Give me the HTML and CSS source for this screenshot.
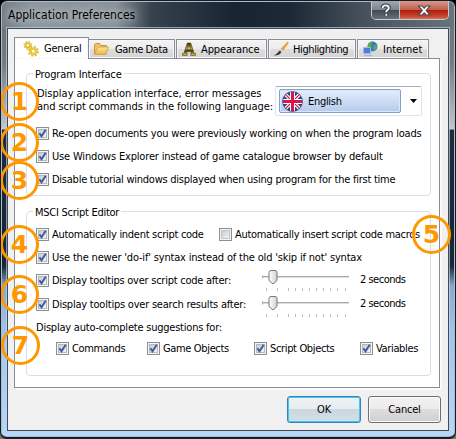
FILE: index.html
```
<!DOCTYPE html>
<html lang="en">
<head>
<meta charset="utf-8">
<title>Application Preferences</title>
<link rel="stylesheet" href="styles.css">
</head>
<body>
<svg width="0" height="0" class="defs">
  <defs>
    <linearGradient id="box" x1="0" y1="0" x2="1" y2="1"><stop offset="0" stop-color="#c4c9d0"/><stop offset="1" stop-color="#f6f6f6"/></linearGradient>
    <linearGradient id="thumb" x1="0" y1="0" x2="1" y2="0"><stop offset="0" stop-color="#fff"/><stop offset="1" stop-color="#d0d0d0"/></linearGradient>
    <linearGradient id="folder" x1="0" y1="0" x2="0" y2="1"><stop offset="0" stop-color="#fbe79b"/><stop offset="1" stop-color="#e9b548"/></linearGradient>
    <linearGradient id="metal" x1="0" y1="0" x2="0" y2="1"><stop offset="0" stop-color="#2f2b12"/><stop offset=".45" stop-color="#c3a52c"/><stop offset=".62" stop-color="#3b3415"/><stop offset="1" stop-color="#f0cf35"/></linearGradient>
    <clipPath id="disc"><circle cx="10.5" cy="10.5" r="10"/></clipPath>
    <symbol id="on" viewBox="0 0 13 13"><rect x=".5" y=".5" width="12" height="12" fill="#f4f4f4" stroke="#8e8f8f"/><rect x="2.5" y="2.5" width="8" height="8" fill="url(#box)" stroke="#b4bac2"/><path d="M3.4 6.2 5.5 9.3 9.7 2.7" fill="none" stroke="#42599b" stroke-width="2"/></symbol>
    <symbol id="off" viewBox="0 0 13 13"><rect x=".5" y=".5" width="12" height="12" fill="#f4f4f4" stroke="#8e8f8f"/><rect x="2.5" y="2.5" width="8" height="8" fill="url(#box)" stroke="#c0c5cb"/></symbol>
    <symbol id="slider" viewBox="0 0 90 24"><path d="M1 6.500H87" stroke="#a9a9a9" stroke-width="1"/><path d="M1 7.500H87" stroke="#dedede"/><path d="M.500 5.500v3" stroke="#a9a9a9"/><path d="M9 .500h4q2 0 2 2v8l-4 3.500-4-3.500v-8q0-2 2-2z" fill="url(#thumb)" stroke="#777"/><path d="M4.500 18v3M15.500 18v3M26.500 18v3M33.500 18v3M40.500 18v3M47.500 18v3M54.500 18v3M61.500 18v3M68.500 18v3M75.500 18v3M83.500 18v3" stroke="#bcbcbc"/></symbol>
  </defs>
</svg>
<div class="window">
  <header class="titlebar">
    <h1>Application Preferences</h1>
    <div class="controls">
      <svg class="help" width="28" height="19" viewBox="0 0 28 19"><path d="M11 7q0-2.800 3.200-2.800T17.400 6.800Q17.400 8.300 15.800 9.200 14.800 9.800 14.800 11.200M14.800 13v2" fill="none" stroke="#333b44" stroke-width="4"/><path d="M11 7q0-2.800 3.200-2.800T17.400 6.800Q17.400 8.300 15.800 9.200 14.800 9.800 14.800 11.200M14.800 13v2" fill="none" stroke="#f5f5f5" stroke-width="2"/></svg>
      <svg class="close" width="48" height="19" viewBox="0 0 48 19"><path d="M18.500 5h3.700l2 2.200 2-2.200h3.700l-3.700 4.500 3.700 4.500h-3.700l-2-2.200-2 2.200h-3.700l3.700-4.500z" fill="#fff" stroke="#5d4b4e" stroke-width="1.200"/></svg>
    </div>
  </header>
  <main class="client">
    <nav class="tabs">
      <div class="tab active"><svg width="16" height="16" viewBox="0 0 16 16"><g fill="none" stroke="#dfbd32"><circle cx="4.800" cy="4.300" r="2.200" stroke-width="1.800"/><circle cx="4.800" cy="4.300" r="3.700" stroke-width="1.400" stroke-dasharray="1.500 1.400"/><circle cx="10.300" cy="10.300" r="2.800" stroke-width="2.600" stroke="#e9c93f"/><circle cx="10.300" cy="10.300" r="4.700" stroke-width="1.700" stroke-dasharray="1.900 1.790"/></g></svg><span>General</span></div>
      <div class="tab data"><svg width="16" height="16" viewBox="0 0 16 16"><path d="M1.500 13.500v-10l1-1h4l1.500 2h5.500v3" fill="#eec566" stroke="#c99436"/><path d="M1.500 13.500 4 7.500l2-1.500h9.500l-2.500 7.500z" fill="url(#folder)" stroke="#d7a648"/></svg><span>Game Data</span></div>
      <div class="tab look"><svg width="16" height="16" viewBox="0 0 16 16"><path fill-rule="evenodd" d="M1.500 14.500v-2h1.300L6.300 2h3.400l3.500 10.500h1.300v2H9.800v-2h.8l-.6-1.700H6l-.6 1.700h.8v2zM6.600 8.500h2.800L8 4.200z" fill="url(#metal)" stroke="#4b431b" stroke-width=".6"/></svg><span>Appearance</span></div>
      <div class="tab high"><svg width="16" height="16" viewBox="0 0 16 16"><path d="M14.800.8 15 2.500 10 9.500 8 8z" fill="#f3a62f" stroke="#dc861d" stroke-width=".5"/><path d="M8 8l2 1.500-1.600 1.600L6.500 9.600z" fill="#c9cfda"/><path d="M6.500 9.600l1.900 1.500Q7 14.500 1 14.800 4.700 12.600 6.500 9.600z" fill="#3d3936"/></svg><span>Highlighting</span></div>
      <div class="tab net"><svg width="16" height="16" viewBox="0 0 16 16"><circle cx="10.500" cy="5.500" r="5" fill="#3f78c8"/><path d="M6 3q2-3 4.500-2.200L9 3l1 2-2 2-2-1zM12 4l3 .5q.5 3-2 5L11 8z" fill="#54b04c"/><path d="M1.500 6.500h7v6h-7z" fill="#4c7ddb" stroke="#a9b9dc"/><path d="M2 14.500h8" stroke="#aeb6c4" stroke-width="1.500"/></svg><span>Internet</span></div>
    </nav>
    <section class="pane">
      <fieldset class="group program">
        <legend>Program Interface</legend>
        <div class="language">
          <p><span class="line1">Display application interface, error messages</span><br><span class="line2">and script commands in the following language:</span></p>
          <div class="combo">
            <div class="choice">
              <svg width="21" height="21" viewBox="0 0 21 21"><g clip-path="url(#disc)"><path fill="#29438c" d="M0 0h21v21H0z"/><path d="M0 0l21 21M21 0 0 21" stroke="#f5f3f8" stroke-width="3.600"/><path d="M0 0l21 21M21 0 0 21" stroke="#cf1747" stroke-width="1.200"/><path d="M10.500 0v21M0 10.500h21" stroke="#fff" stroke-width="5"/><path d="M10.500 0v21M0 10.500h21" stroke="#d7174b" stroke-width="3"/></g><circle cx="10.500" cy="10.500" r="10" fill="none" stroke="#27345f" stroke-opacity=".5"/></svg>
              <span>English</span>
            </div>
            <svg class="arrow" width="7" height="4" viewBox="0 0 7 4"><path d="M0 0h7L3.500 4z"/></svg>
          </div>
        </div>
        <label class="check"><svg width="13" height="13"><use href="#on"/></svg><span class="s1">Re-open documents you were previously working on when the program loads</span></label>
        <label class="check"><svg width="13" height="13"><use href="#on"/></svg><span class="s2">Use Windows Explorer instead of game catalogue browser by default</span></label>
        <label class="check"><svg width="13" height="13"><use href="#on"/></svg><span class="s3">Disable tutorial windows displayed when using program for the first time</span></label>
      </fieldset>
      <fieldset class="group editor">
        <legend>MSCI Script Editor</legend>
        <div class="pair">
          <label class="check"><svg width="13" height="13"><use href="#on"/></svg><span class="s4">Automatically indent script code</span></label>
          <label class="check"><svg width="13" height="13"><use href="#off"/></svg><span class="s5">Automatically insert script code macros</span></label>
        </div>
        <label class="check syntax"><svg width="13" height="13"><use href="#on"/></svg><span class="s6">Use the newer 'do-if' syntax instead of the old 'skip if not' syntax</span></label>
        <div class="delay">
          <label class="check"><svg width="13" height="13"><use href="#on"/></svg><span class="s7">Display tooltips over script code after:</span></label>
          <svg class="slider" width="90" height="24"><use href="#slider"/></svg><span class="value">2 seconds</span>
        </div>
        <div class="delay second">
          <label class="check"><svg width="13" height="13"><use href="#on"/></svg><span class="s8">Display tooltips over search results after:</span></label>
          <svg class="slider" width="90" height="24"><use href="#slider"/></svg><span class="value">2 seconds</span>
        </div>
        <p class="suggest">Display auto-complete suggestions for:</p>
        <div class="kinds">
          <label class="check"><svg width="13" height="13"><use href="#on"/></svg><span>Commands</span></label>
          <label class="check"><svg width="13" height="13"><use href="#on"/></svg><span>Game Objects</span></label>
          <label class="check"><svg width="13" height="13"><use href="#on"/></svg><span>Script Objects</span></label>
          <label class="check"><svg width="13" height="13"><use href="#on"/></svg><span>Variables</span></label>
        </div>
      </fieldset>
    </section>
    <footer class="actions"><button class="ok">OK</button><button>Cancel</button></footer>
  </main>
  <span class="badge b1">1</span><span class="badge b2">2</span><span class="badge b3">3</span><span class="badge b4">4</span><span class="badge b5">5</span><span class="badge b6">6</span><span class="badge b7">7</span>
</div>
</body>
</html>
```
FILE: styles.css
```
* { box-sizing: border-box; }
body { margin: 0; background: linear-gradient(#000 0 88%, #777); overflow: hidden; font: 11px/13px "DejaVu Sans Condensed", "DejaVu Sans", sans-serif; font-stretch: condensed; color: #000; }
svg { display: block; flex: none; }
.defs { position: absolute; }
p, h1 { margin: 0; font-size: inherit; font-weight: inherit; }
.window { position: relative; width: 456px; height: 439px; padding: 0 7px 7px; border: 1px solid #151b22; border-width: 1px 1px 2px; border-radius: 7px; overflow: hidden; box-shadow: inset 0 0 0 1px #aebac4;
  background: linear-gradient(90deg, #757d84 0, #8f979e 30px, #8b939a 115px, #36424e 150px, #182431 235px, #1c2936 290px, #45505b 360px, #6a747d 456px) 0 0/100% 28px no-repeat, linear-gradient(#6a7178 0, #737a81 60px, #bfc3c7 125px, #c8cbce 128px, #1c2d3e 129px, #172636 265px, #86a9ce 285px, #9fc4ec 330px, #b5d8fc 439px); }
.titlebar { height: 27px; display: flex; justify-content: space-between; }
h1 { margin: 6px 0 0; height: 16px; font-size: 12px; line-height: 16px; text-shadow: 0 0 6px #c6cdd3, 0 0 9px #b9c1c8; white-space: nowrap; }
.controls { display: flex; height: 19px; margin-right: -1px; border: 1px solid #c5cbd0; border-top: 0; border-radius: 0 0 5px 5px; overflow: hidden; }
.help { border-right: 1px solid #bcc3c9; background: linear-gradient(#a2a8ae, #7a838b 48%, #414b55 50%, #6c757d); }
.close { background: linear-gradient(#d79a8f, #c25d4d 46%, #a9200e 50%, #c7452d 80%, #da836a); }
.client { height: 403px; margin-left: -1px; margin-right: -1px; background: #f0f0f0; border: 1px solid #3e4a59; box-shadow: 0 0 0 1px #c4d5e4aa; padding: 8px 7px 0 6px; display: flex; flex-direction: column; }
.tabs { height: 22px; display: flex; align-items: flex-end; flex: none; position: relative; margin-bottom: -1px; }
.tab { height: 20px; border: 1px solid #898c95; background: linear-gradient(#f3f3f3, #ececec 48%, #dedede 50%, #d4d4d4); display: flex; align-items: center; padding-left: 4px; gap: 4px; white-space: nowrap; margin-right: 1px; box-shadow: inset 0 0 0 1px #f7f7f7; letter-spacing: -.25px; }
.active { width: 75px; height: 22px; background: #fff; border-bottom: 0; padding-left: 8px; gap: 5px; margin-right: 0; letter-spacing: -.2px; }
.data { width: 86px; border-left: 0; gap: 6px; letter-spacing: -.4px; }
.look { width: 91px; letter-spacing: -.1px; }
.high { width: 88px; letter-spacing: -.4px; }
.net { width: 72px; gap: 5px; letter-spacing: 0; }
.pane { height: 330px; width: 426px; flex: none; border: 1px solid #898c95; background: #fff; box-shadow: 2px 2px 0 #fafafa; padding: 8px 8px 0 11px; letter-spacing: -.2px; }
.group { margin: 0; min-width: 0; width: 405px; border: 1px solid #d5dfe8; border-radius: 4px; padding: 0 0 0 9px; }
legend { margin-left: -3px; padding: 0 2px; height: 13px; line-height: 15px; letter-spacing: -.15px; }
.program { height: 129px; }
.editor { height: 171px; margin-top: 9px; }
.editor legend { letter-spacing: -.27px; }
.language { display: flex; height: 42px; align-items: flex-start; }
.language p { width: 239px; padding-top: 7px; margin-left: 1px; white-space: nowrap; }
.line1 { letter-spacing: 0; }
.line2 { letter-spacing: -.06px; }
.combo { width: 147px; height: 30px; margin: 6px 0 0 -1px; border: 1px solid #e3e3ea; border-top-color: #abadb3; border-radius: 2px; display: flex; align-items: center; padding: 0 4px 0 3px; justify-content: space-between; letter-spacing: -.3px; }
.choice { width: 122px; height: 24px; display: flex; align-items: center; gap: 5px; padding-left: 2px; border: 1px solid #7da2ce; border-radius: 2px; box-shadow: inset 0 0 0 1px #d9e7fb; background: linear-gradient(#e4ecfa, #b4cbee); }
.check { display: flex; align-items: center; gap: 3px; height: 23px; white-space: nowrap; }
.s2 { letter-spacing: -.17px; }
.s3 { letter-spacing: -.25px; }
.s4 { letter-spacing: -.28px; }
.s5 { letter-spacing: -.3px; }
.s6 { letter-spacing: -.18px; }
.s7 { letter-spacing: -.25px; }
.s8 { letter-spacing: -.22px; }
.pair { display: flex; padding-top: 5px; height: 28px; }
.pair .check:first-child { width: 183px; }
.syntax { height: 22px; }
.delay { display: flex; height: 24px; align-items: flex-start; }
.delay .check { width: 226px; height: 25px; }
.delay .slider { margin-top: 2px; }
.value { margin: 5px 0 0 8px; white-space: nowrap; letter-spacing: -.5px; }
.second { height: 25px; }
.delay.second .slider { margin-top: 4px; }
.suggest { height: 20px; line-height: 22px; letter-spacing: -.22px; }
.kinds { display: grid; grid-template-columns: 91px 107px 106px auto; padding-left: 20px; letter-spacing: -.35px; }
.actions { display: flex; gap: 7px; justify-content: flex-end; margin: 8px 0 0; }
button { font: inherit; width: 73px; height: 27px; padding: 0; border: 1px solid #707070; border-radius: 3px; background: linear-gradient(#f2f2f2, #ebebeb 49%, #dddddd 50%, #cfcfcf); box-shadow: inset 0 0 0 1px #fafafa; letter-spacing: -.2px; }
.ok { width: 74px; border-color: #3c7fb1; background: linear-gradient(#f0f2f3, #e6ecf0 49%, #ccd7df 50%, #d4dee5); box-shadow: inset 0 0 0 1px #37cdf5; }
.badge { position: absolute; left: -1px; width: 39px; height: 39px; border: 3px solid #ff9800; border-radius: 50%; color: #ff9800; font: bold 25px/33px "DejaVu Sans", sans-serif; font-stretch: normal; text-align: center; }
.b1 { top: 81px; } .b2 { top: 122px; } .b3 { top: 160px; } .b4 { top: 224px; }
.b5 { top: 214px; left: 411px; } .b6 { top: 274px; } .b7 { top: 325px; left: 0; }
```
